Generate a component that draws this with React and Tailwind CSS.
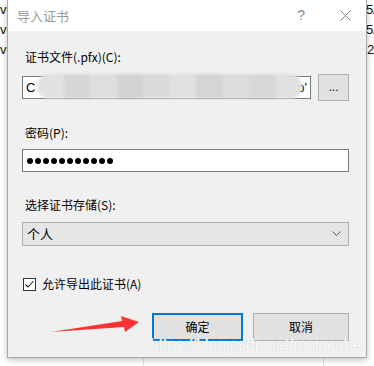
import React from "react";

const font = { fontFamily: '"Noto Sans CJK SC", "Noto Sans", sans-serif' };

function Dots() {
  return (
    <div className="flex items-center gap-[2px]">
      {Array.from({ length: 11 }).map((_, i) => (
        <span key={i} className="block w-[6px] h-[6px] rounded-full bg-black" />
      ))}
    </div>
  );
}

export default function App() {
  return (
    <div
      className="relative w-[374px] h-[366px] bg-white overflow-hidden flex text-[12px] text-black"
      style={font}
    >
      {/* left background strip */}
      <div className="w-[7px] overflow-hidden flex flex-col pt-[0px] text-[13px] leading-[20px] font-['Liberation_Sans'] text-[#111]">
        <span>vc</span>
        <span>vc</span>
        <span>vc</span>
      </div>

      {/* dialog */}
      <div className="w-[360px] h-[358px] flex flex-col border-x border-b border-[#a9a9a9] bg-[#f0f0f0] shadow-[0_2px_6px_rgba(0,0,0,0.25)] z-10">
        {/* title bar */}
        <div className="h-[31px] bg-white flex items-center pl-[9px] pr-[14px]">
          <span className="text-[13px] text-[#9a9a9a]">导入证书</span>
          <span className="ml-auto mr-[35px] text-[14px] text-[#8a8a8a] font-['Liberation_Sans']">?</span>
          <svg width="11" height="11" viewBox="0 0 11 11" className="mr-[1px]">
            <path d="M0.5 0.5 L10.5 10.5 M10.5 0.5 L0.5 10.5" stroke="#8a8a8a" strokeWidth="1" />
          </svg>
        </div>

        {/* body */}
        <div className="flex flex-col pl-[14px] pr-[17px] pt-[18px]">
          <div className="h-[16px] leading-[16px] pl-[3px]">证书文件(.pfx)(C):</div>
          <div className="mt-[9px] h-[27px] flex items-center">
            <div className="relative flex-1 h-[23px] border border-[#7a7a7a] bg-white flex items-center px-[3px]">
              <span className="font-['Liberation_Sans'] text-[13px]">C</span>
              <span className="ml-auto font-['Liberation_Sans'] text-[13px]">o'</span>
              <div className="absolute left-[14px] right-[8px] top-[-3px] bottom-[-1px] rounded-full bg-[#dcdcdc] blur-[1.5px] flex overflow-hidden">
                <div className="flex-1 bg-[#e2e2e2]" />
                <div className="flex-1 bg-[#d6d6d6]" />
                <div className="flex-1 bg-[#dedede]" />
                <div className="flex-1 bg-[#d3d3d3]" />
                <div className="flex-1 bg-[#dadada]" />
                <div className="flex-1 bg-[#e0e0e0]" />
                <div className="flex-1 bg-[#d5d5d5]" />
                <div className="flex-1 bg-[#dcdcdc]" />
                <div className="flex-1 bg-[#d8d8d8]" />
                <div className="flex-1 bg-[#e1e1e1]" />
              </div>
            </div>
            <div className="ml-[7px] w-[31px] h-[27px] border border-[#adadad] bg-[#e1e1e1] flex items-center justify-center text-[12px] leading-none pb-[2px] font-['Liberation_Sans']">
              ...
            </div>
          </div>

          <div className="mt-[24px] h-[16px] leading-[16px] pl-[3px]">密码(P):</div>
          <div className="mt-[8px] h-[23px] border border-[#7a7a7a] bg-white flex items-center pl-[4px]">
            <Dots />
          </div>

          <div className="mt-[25px] h-[16px] leading-[16px] pl-[3px]">选择证书存储(S):</div>
          <div className="mt-[9px] h-[24px] border border-[#adadad] bg-[#e5e5e5] flex items-center pl-[4px] pr-[7px]">
            <span className="text-[13px]">个人</span>
            <svg width="9" height="6" viewBox="0 0 9 6" className="ml-auto">
              <path d="M0.5 0.5 L4.5 4.5 L8.5 0.5" stroke="#555" strokeWidth="1" fill="none" />
            </svg>
          </div>

          <div className="mt-[30px] h-[16px] flex items-center pl-[1px]">
            <div className="w-[13px] h-[13px] border border-[#333] bg-white flex items-center justify-center">
              <svg width="11" height="11" viewBox="0 0 11 11">
                <path d="M1.5 5.5 L4 8 L9.5 2" stroke="#222" strokeWidth="1.1" fill="none" />
              </svg>
            </div>
            <span className="ml-[6px] leading-[16px]">允许导出此证书(A)</span>
          </div>

          <div className="mt-[21px] flex justify-end">
            <div className="w-[91px] h-[28px] border-2 border-[#0078d7] bg-[#e1e1e1] flex items-center justify-center">
              确定
            </div>
            <div className="ml-[10px] w-[96px] h-[28px] border border-[#adadad] bg-[#e1e1e1] flex items-center justify-center">
              取消
            </div>
          </div>
        </div>
      </div>

      {/* right background strip */}
      <div className="flex-1 overflow-hidden flex flex-col text-[13px] leading-[20px] font-['Liberation_Sans'] text-[#111]">
        <span className="-ml-[1px]">5/</span>
        <span className="-ml-[1px]">5/</span>
        <span className="-ml-[1px] flex items-center"><span className="inline-block w-[1px] h-[14px] bg-[#0078d7] mr-[1px]" />2</span>
      </div>

      {/* faint lines below dialog */}
      <div className="absolute left-[143px] top-[358px] w-px h-[8px] bg-[#dde3ec]" />
      <div className="absolute left-[323px] top-[358px] w-px h-[8px] bg-[#dde3ec]" />

      {/* red arrow annotation */}
      <svg className="absolute left-0 top-0 z-20" width="374" height="366" viewBox="0 0 374 366">
        <polygon points="51,332 122,321 121,316 139,322 125,332 124,327" fill="#ff3333" />
      </svg>

      {/* watermark */}
      <div
        className="absolute left-[150px] top-[336px] z-20 text-[16px] leading-[18px] font-['Liberation_Sans'] text-[#fcfcfc] tracking-[-0.2px]"
        style={{ textShadow: "0 0 1px #d0d0d0, 0 0 1px #d0d0d0" }}
      >
        https://blog.csdn.net/mojocube
      </div>
    </div>
  );
}
